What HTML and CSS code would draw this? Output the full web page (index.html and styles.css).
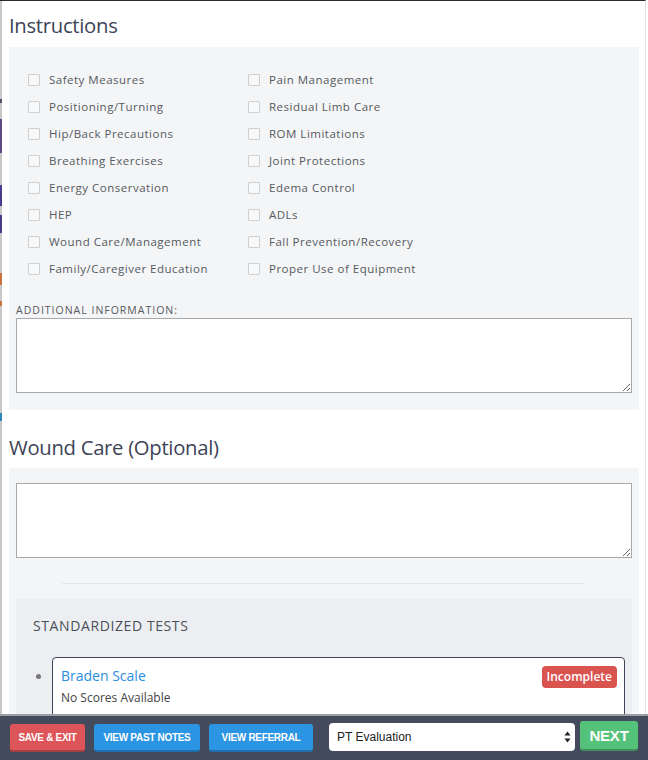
FILE: index.html
```html
<!DOCTYPE html>
<html lang="en">
<head>
<meta charset="utf-8">
<title>PT Evaluation</title>
<link rel="stylesheet" href="styles.css">
</head>
<body>
<div class="page">
  <h2 class="section-title">Instructions</h2>
  <div class="panel panel-instructions">
    <div class="check-grid">
      <label class="check"><span class="box"></span>Safety Measures</label>
      <label class="check"><span class="box"></span>Pain Management</label>
      <label class="check"><span class="box"></span>Positioning/Turning</label>
      <label class="check"><span class="box"></span>Residual Limb Care</label>
      <label class="check"><span class="box"></span>Hip/Back Precautions</label>
      <label class="check"><span class="box"></span>ROM Limitations</label>
      <label class="check"><span class="box"></span>Breathing Exercises</label>
      <label class="check"><span class="box"></span>Joint Protections</label>
      <label class="check"><span class="box"></span>Energy Conservation</label>
      <label class="check"><span class="box"></span>Edema Control</label>
      <label class="check"><span class="box"></span>HEP</label>
      <label class="check"><span class="box"></span>ADLs</label>
      <label class="check"><span class="box"></span>Wound Care/Management</label>
      <label class="check"><span class="box"></span>Fall Prevention/Recovery</label>
      <label class="check"><span class="box"></span>Family/Caregiver Education</label>
      <label class="check"><span class="box"></span>Proper Use of Equipment</label>
    </div>
    <div class="field-label">Additional Information:</div>
    <textarea class="note"></textarea>
  </div>

  <h2 class="section-title wound-title">Wound Care (Optional)</h2>
  <div class="panel panel-wound">
    <textarea class="note"></textarea>
    <hr class="divider">
    <div class="tests">
      <div class="tests-title">Standardized Tests</div>
      <div class="test-row">
        <span class="bullet"></span>
        <div class="test-card">
          <div class="test-head">
            <span class="test-name">Braden Scale</span>
            <span class="badge">Incomplete</span>
          </div>
          <div class="test-sub">No Scores Available</div>
        </div>
      </div>
    </div>
  </div>
</div>

<div class="bottom-bar">
  <button class="btn btn-red">SAVE &amp; EXIT</button>
  <button class="btn btn-blue btn-notes">VIEW PAST NOTES</button>
  <button class="btn btn-blue btn-referral">VIEW REFERRAL</button>
  <div class="select-wrap">
    <select class="note-type">
      <option>PT Evaluation</option>
    </select>
    <svg class="select-arrows" width="7" height="12" viewBox="0 0 7 12"><path d="M3.5 0.5 L6.5 4.5 H0.5 Z M3.5 11.5 L6.5 7.5 H0.5 Z" fill="#222"/></svg>
  </div>
  <button class="btn btn-green btn-next">NEXT</button>
</div>
</body>
</html>
```

FILE: styles.css
```css
html, body {
  margin: 0;
  padding: 0;
  background: #fff;
  overflow: hidden;
}

body {
  font-family: "Open Sans", "Noto Sans", sans-serif;
  color: #555;
}

.page {
  width: 646px;
  height: 760px;
  box-sizing: border-box;
  border-top: 1px solid #2b2b2b;
  border-right: 1px solid #e4e4e4;
  padding: 0 6px 0 9px;
  overflow: hidden;
  background:
    linear-gradient(to bottom,
      #c8c8c8 0 98px,
      #55506a 98px 102px,
      #c8c8c8 102px 118px,
      #5b4a82 118px 152px,
      #c8c8c8 152px 184px,
      #4d3c8c 184px 205px,
      #c8c8c8 205px 214px,
      #4d3c8c 214px 232px,
      #c8c8c8 232px 272px,
      #c9733e 272px 284px,
      #c8c8c8 284px 300px,
      #c9733e 300px 305px,
      #c8c8c8 305px 412px,
      #2b86b8 412px 420px,
      #c8c8c8 420px 100%) 0 0 / 2px 100% no-repeat,
    #fff;
}

.section-title {
  margin: 9px 0 7px;
  font-size: 20.3px;
  line-height: 30px;
  font-weight: 400;
  color: #3d4457;
  letter-spacing: -0.3px;
}

.wound-title {
  margin-top: 22px;
  margin-bottom: 6px;
}

.panel {
  background: #f4f5f7;
  padding: 19px 7px 17px;
}

.check-grid {
  display: grid;
  grid-template-columns: 220px 1fr;
  grid-auto-rows: 27px;
  margin-left: 12px;
}

.check {
  display: flex;
  align-items: center;
  gap: 9px;
  font-size: 11.5px;
  letter-spacing: 0.5px;
  color: #555a60;
}

.box {
  width: 10px;
  height: 10px;
  border: 1px solid #cfcfcf;
  border-radius: 1px;
  background: #f7f8f9;
  flex: none;
}

.field-label {
  margin: 21px 0 1px;
  font-size: 10.5px;
  line-height: 14px;
  letter-spacing: 1px;
  text-transform: uppercase;
  color: #555a60;
}

.note {
  display: block;
  box-sizing: border-box;
  width: 100%;
  height: 75px;
  margin: 0;
  border: 1px solid #a8a8a8;
  border-radius: 0;
  background: #fff;
  font-family: inherit;
}

.panel-wound {
  padding-top: 15px;
  padding-bottom: 0;
}

.divider {
  margin: 25px 47px 15px 46px;
  border: 0;
  border-top: 1px solid #e3e5e8;
  height: 0;
}

.tests {
  background: #eceef1;
  padding: 18px 7px 40px 17px;
}

.tests-title {
  font-size: 14px;
  line-height: 18px;
  letter-spacing: 0.6px;
  text-transform: uppercase;
  color: #4a5058;
  margin-bottom: 22px;
}

.test-row {
  display: flex;
  align-items: flex-start;
}

.bullet {
  flex: none;
  width: 5px;
  height: 5px;
  border-radius: 50%;
  background: #777;
  margin: 17px 11px 0 3px;
}

.test-card {
  flex: 1;
  background: #fff;
  border: 1px solid #3d4457;
  border-radius: 4px;
  padding: 8px 7px 30px 8px;
}

.test-head {
  display: flex;
  justify-content: space-between;
  align-items: flex-start;
}

.test-name {
  font-size: 14px;
  line-height: 20px;
  color: #2b8ee0;
}

.badge {
  background: #d9534f;
  color: #fff;
  font-size: 12px;
  font-weight: 600;
  line-height: 22px;
  padding: 0 5px;
  border-radius: 4px;
}

.test-sub {
  margin-top: 1px;
  font-size: 12px;
  line-height: 18px;
  color: #444;
}

.bottom-bar {
  position: fixed;
  left: 0;
  right: 0;
  bottom: 0;
  height: 36px;
  border-top: 2px solid #9c9ea5;
  background: #444b5c;
  display: flex;
  align-items: flex-start;
  padding: 8px 10px 0;
}

.btn {
  font-family: "Liberation Sans", Arial, sans-serif;
  font-weight: 700;
  font-size: 10px;
  letter-spacing: -0.3px;
  white-space: nowrap;
  color: #fff;
  height: 28px;
  border: 0;
  border-bottom: 2px solid rgba(0, 0, 0, 0.25);
  border-radius: 3px;
  padding: 0;
  margin-right: 9px;
  box-sizing: border-box;
  text-align: center;
}

.btn-red {
  background: #dd5558;
  width: 75px;
}

.btn-blue {
  background: #2b94e3;
}

.btn-notes {
  width: 106px;
}

.btn-referral {
  width: 104px;
  margin-right: 16px;
}

.select-wrap {
  position: relative;
  width: 246px;
  height: 28px;
  margin-top: -1px;
  margin-right: 5px;
}

.note-type {
  -webkit-appearance: none;
  appearance: none;
  width: 100%;
  height: 100%;
  border: 0;
  border-radius: 4px;
  background: #fff;
  font-family: "Liberation Sans", Arial, sans-serif;
  font-size: 12px;
  color: #222;
  padding: 0 8px;
  margin: 0;
}

.select-arrows {
  position: absolute;
  right: 4px;
  top: 8px;
}

.btn-green {
  background: #55c27b;
  width: 58px;
  height: 30px;
  margin: -3px 0 0;
  font-size: 15px;
  letter-spacing: -0.2px;
}
```
